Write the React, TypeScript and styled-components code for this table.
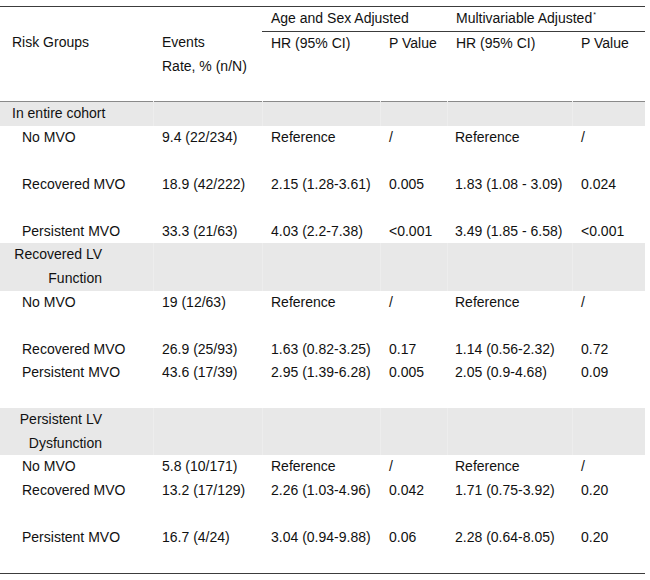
import React from "react";
import styled, { createGlobalStyle } from "styled-components";

const LINE = 23.55;

const GlobalStyle = createGlobalStyle`
  body {
    margin: 0;
    background: #ffffff;
    font-family: "Liberation Sans", Arial, Helvetica, sans-serif;
    color: #111111;
  }
`;

const Page = styled.div`
  padding-top: 6px;
  width: 645px;
`;

const Table = styled.table`
  width: 645px;
  table-layout: fixed;
  border-collapse: collapse;
  border-top: 1px solid #3c3c3c;
  border-bottom: 1px solid #3c3c3c;
  font-size: 14px;
  line-height: ${LINE}px;
`;

const HeadRow = styled.tr<{ $lines: number; $rule?: boolean }>`
  height: ${({ $lines }) => $lines * LINE}px;
  border-bottom: ${({ $rule }) => ($rule ? "1px solid #8a8a8a" : "none")};
`;

const HeadCell = styled.th<{ $first?: boolean; $underline?: boolean }>`
  font-weight: normal;
  text-align: left;
  vertical-align: top;
  white-space: nowrap;
  padding: 0 0 0 ${({ $first }) => ($first ? 12 : 9)}px;
  border-bottom: ${({ $underline }) => ($underline ? "1px solid #3c3c3c" : "none")};
`;

const Star = styled.sup`
  font-size: 7px;
  line-height: 0;
  vertical-align: 6px;
  margin-left: 1px;
`;

const Row = styled.tr<{ $lines: number; $shaded?: boolean }>`
  height: ${({ $lines }) => $lines * LINE}px;
  background: ${({ $shaded }) => ($shaded ? "#e8e8e8" : "transparent")};
`;

const Cell = styled.td<{ $indent?: number; $shaded?: boolean }>`
  padding: 0 0 0 ${({ $indent }) => $indent ?? 9}px;
  vertical-align: top;
  white-space: nowrap;
  border-left: ${({ $shaded }) => ($shaded ? "1px solid #ededed" : "none")};
  &:first-child {
    border-left: none;
  }
`;

const GroupLabel = styled.div<{ $right?: boolean }>`
  width: ${({ $right }) => ($right ? "90px" : "auto")};
  text-align: ${({ $right }) => ($right ? "right" : "left")};
  white-space: nowrap;
`;

type DataRow = {
  kind: "data";
  name: string;
  events: string;
  hr1: string;
  p1: string;
  hr2: string;
  p2: string;
  lines: number;
};

type GroupRow = {
  kind: "group";
  label: React.ReactNode;
  right?: boolean;
  lines: number;
};

const ref = { hr1: "Reference", p1: "/", hr2: "Reference", p2: "/" };

const rows: (DataRow | GroupRow)[] = [
  { kind: "group", label: "In entire cohort", lines: 1 },
  { kind: "data", name: "No MVO", events: "9.4 (22/234)", ...ref, lines: 2 },
  { kind: "data", name: "Recovered MVO", events: "18.9 (42/222)", hr1: "2.15 (1.28-3.61)", p1: "0.005", hr2: "1.83 (1.08 - 3.09)", p2: "0.024", lines: 2 },
  { kind: "data", name: "Persistent MVO", events: "33.3 (21/63)", hr1: "4.03 (2.2-7.38)", p1: "<0.001", hr2: "3.49 (1.85 - 6.58)", p2: "<0.001", lines: 1 },
  { kind: "group", label: <>Recovered LV<br />Function</>, right: true, lines: 2 },
  { kind: "data", name: "No MVO", events: "19 (12/63)", ...ref, lines: 2 },
  { kind: "data", name: "Recovered MVO", events: "26.9 (25/93)", hr1: "1.63 (0.82-3.25)", p1: "0.17", hr2: "1.14 (0.56-2.32)", p2: "0.72", lines: 1 },
  { kind: "data", name: "Persistent MVO", events: "43.6 (17/39)", hr1: "2.95 (1.39-6.28)", p1: "0.005", hr2: "2.05 (0.9-4.68)", p2: "0.09", lines: 2 },
  { kind: "group", label: <>Persistent LV<br />Dysfunction</>, right: true, lines: 2 },
  { kind: "data", name: "No MVO", events: "5.8 (10/171)", ...ref, lines: 1 },
  { kind: "data", name: "Recovered MVO", events: "13.2 (17/129)", hr1: "2.26 (1.03-4.96)", p1: "0.042", hr2: "1.71 (0.75-3.92)", p2: "0.20", lines: 2 },
  { kind: "data", name: "Persistent MVO", events: "16.7 (4/24)", hr1: "3.04 (0.94-9.88)", p1: "0.06", hr2: "2.28 (0.64-8.05)", p2: "0.20", lines: 2 },
];

const widths = [153, 109, 118, 67, 125, 73];

export default function App() {
  return (
    <Page>
      <GlobalStyle />
      <Table>
        <colgroup>
          {widths.map((w, i) => (
            <col key={i} style={{ width: w }} />
          ))}
        </colgroup>
        <thead>
          <HeadRow $lines={1}>
            <HeadCell $first />
            <HeadCell />
            <HeadCell colSpan={2} $underline>
              Age and Sex Adjusted
            </HeadCell>
            <HeadCell colSpan={2} $underline>
              Multivariable Adjusted<Star>*</Star>
            </HeadCell>
          </HeadRow>
          <HeadRow $lines={3} $rule>
            <HeadCell $first>Risk Groups</HeadCell>
            <HeadCell>
              Events
              <br />
              Rate, % (n/N)
            </HeadCell>
            <HeadCell>HR (95% CI)</HeadCell>
            <HeadCell>P Value</HeadCell>
            <HeadCell>HR (95% CI)</HeadCell>
            <HeadCell>P Value</HeadCell>
          </HeadRow>
        </thead>
        <tbody>
          {rows.map((r, i) =>
            r.kind === "group" ? (
              <Row key={i} $lines={r.lines} $shaded>
                <Cell $indent={12} $shaded>
                  <GroupLabel $right={r.right}>{r.label}</GroupLabel>
                </Cell>
                {[0, 1, 2, 3, 4].map((k) => (
                  <Cell key={k} $shaded />
                ))}
              </Row>
            ) : (
              <Row key={i} $lines={r.lines}>
                <Cell $indent={22}>{r.name}</Cell>
                <Cell>{r.events}</Cell>
                <Cell>{r.hr1}</Cell>
                <Cell>{r.p1}</Cell>
                <Cell $indent={8}>{r.hr2}</Cell>
                <Cell>{r.p2}</Cell>
              </Row>
            )
          )}
        </tbody>
      </Table>
    </Page>
  );
}
